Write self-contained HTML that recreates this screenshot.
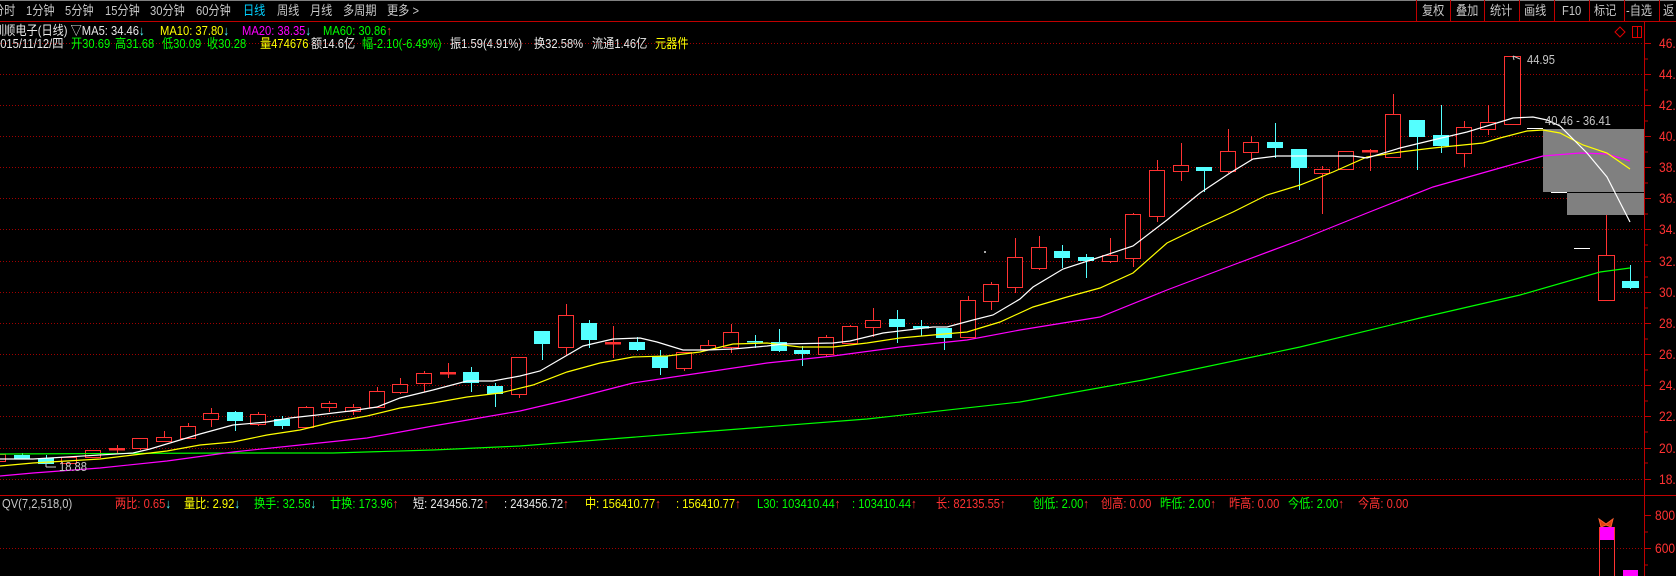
<!DOCTYPE html>
<html><head><meta charset="utf-8">
<style>
body{margin:0;background:#000;width:1676px;height:576px;overflow:hidden;position:relative;font-family:"Liberation Sans","Noto Sans CJK SC",sans-serif;font-size:13px;}
.t{position:absolute;white-space:nowrap;line-height:14px;transform:scaleX(0.86);transform-origin:0 0;}
.w{color:#e8e8e8}.y{color:#ffff00}.m{color:#ff00ff}.g{color:#00ff00}.c{color:#54ffff}.r{color:#ff3232}.gr{color:#c8c8c8}
svg{position:absolute;left:0;top:0}
</style></head><body>
<svg width="1676" height="576" viewBox="0 0 1676 576">
<line x1="0" y1="0.5" x2="1676" y2="0.5" stroke="#808080"/>
<line x1="0" y1="21.5" x2="1676" y2="21.5" stroke="#c00000"/>
<line x1="0" y1="495.5" x2="1676" y2="495.5" stroke="#c00000"/>
<line x1="1644.5" y1="21" x2="1644.5" y2="576" stroke="#c00000"/>
<g stroke="#c00000">
<line x1="1416.5" y1="0" x2="1416.5" y2="21"/><line x1="1450.5" y1="0" x2="1450.5" y2="21"/><line x1="1484.5" y1="0" x2="1484.5" y2="21"/><line x1="1519.5" y1="0" x2="1519.5" y2="21"/><line x1="1554.5" y1="0" x2="1554.5" y2="21"/><line x1="1589.5" y1="0" x2="1589.5" y2="21"/><line x1="1624.5" y1="0" x2="1624.5" y2="21"/><line x1="1659.5" y1="0" x2="1659.5" y2="21"/>
</g>
<g stroke="#a00000" stroke-dasharray="1 2">
<line x1="0" y1="43.5" x2="1644" y2="43.5"/><line x1="0" y1="74.5" x2="1644" y2="74.5"/><line x1="0" y1="105.5" x2="1644" y2="105.5"/><line x1="0" y1="136.5" x2="1644" y2="136.5"/><line x1="0" y1="167.5" x2="1644" y2="167.5"/><line x1="0" y1="198.5" x2="1644" y2="198.5"/><line x1="0" y1="229.5" x2="1644" y2="229.5"/><line x1="0" y1="261.5" x2="1644" y2="261.5"/><line x1="0" y1="292.5" x2="1644" y2="292.5"/><line x1="0" y1="323.5" x2="1644" y2="323.5"/><line x1="0" y1="354.5" x2="1644" y2="354.5"/><line x1="0" y1="385.5" x2="1644" y2="385.5"/><line x1="0" y1="416.5" x2="1644" y2="416.5"/><line x1="0" y1="448.5" x2="1644" y2="448.5"/><line x1="0" y1="479.5" x2="1644" y2="479.5"/><line x1="0" y1="548.5" x2="1644" y2="548.5"/>
</g>
<g stroke="#c00000">
<line x1="1644" y1="43.5" x2="1651" y2="43.5"/><line x1="1644" y1="74.5" x2="1651" y2="74.5"/><line x1="1644" y1="105.5" x2="1651" y2="105.5"/><line x1="1644" y1="136.5" x2="1651" y2="136.5"/><line x1="1644" y1="167.5" x2="1651" y2="167.5"/><line x1="1644" y1="198.5" x2="1651" y2="198.5"/><line x1="1644" y1="229.5" x2="1651" y2="229.5"/><line x1="1644" y1="261.5" x2="1651" y2="261.5"/><line x1="1644" y1="292.5" x2="1651" y2="292.5"/><line x1="1644" y1="323.5" x2="1651" y2="323.5"/><line x1="1644" y1="354.5" x2="1651" y2="354.5"/><line x1="1644" y1="385.5" x2="1651" y2="385.5"/><line x1="1644" y1="416.5" x2="1651" y2="416.5"/><line x1="1644" y1="448.5" x2="1651" y2="448.5"/><line x1="1644" y1="479.5" x2="1651" y2="479.5"/>
<line x1="1644" y1="59" x2="1648" y2="59"/><line x1="1644" y1="90" x2="1648" y2="90"/><line x1="1644" y1="121" x2="1648" y2="121"/><line x1="1644" y1="152" x2="1648" y2="152"/><line x1="1644" y1="183" x2="1648" y2="183"/><line x1="1644" y1="214" x2="1648" y2="214"/><line x1="1644" y1="245" x2="1648" y2="245"/><line x1="1644" y1="277" x2="1648" y2="277"/><line x1="1644" y1="308" x2="1648" y2="308"/><line x1="1644" y1="339" x2="1648" y2="339"/><line x1="1644" y1="370" x2="1648" y2="370"/><line x1="1644" y1="401" x2="1648" y2="401"/><line x1="1644" y1="432" x2="1648" y2="432"/><line x1="1644" y1="463" x2="1648" y2="463"/>
<line x1="1644" y1="515.5" x2="1651" y2="515.5"/><line x1="1644" y1="548.5" x2="1651" y2="548.5"/><line x1="1644" y1="532" x2="1648" y2="532"/><line x1="1644" y1="565" x2="1648" y2="565"/>
</g>
<path d="M1620 27 L1625 32 L1620 37 L1615 32 Z" fill="none" stroke="#e00000"/>
<rect x="1632.5" y="26.5" width="9" height="11" fill="none" stroke="#e00000"/><line x1="1637.5" y1="26" x2="1637.5" y2="38" stroke="#e00000"/>
<rect x="1543" y="129" width="101" height="63" fill="#808080"/>
<rect x="1567" y="193" width="77" height="22" fill="#808080"/>
<g stroke="#fff"><line x1="1527" y1="128.5" x2="1543" y2="128.5"/><line x1="1551" y1="192.5" x2="1567" y2="192.5"/><line x1="1574" y1="248.5" x2="1590" y2="248.5"/></g>
<rect x="984" y="251" width="2" height="2" fill="#aaa"/>
<g stroke-width="1">
<g stroke="#ff3232" fill="#000">
<rect x="-9.5" y="454.5" width="15" height="7"/>
<rect x="61.5" y="457.5" width="15" height="6"/>
<rect x="85.5" y="450.5" width="15" height="7"/>
<line x1="140.5" y1="448" x2="140.5" y2="450"/><rect x="132.5" y="438.5" width="15" height="10"/>
<line x1="164.5" y1="431" x2="164.5" y2="437"/><rect x="156.5" y="437.5" width="15" height="4"/>
<line x1="188.5" y1="423" x2="188.5" y2="426"/><rect x="180.5" y="426.5" width="15" height="12"/>
<line x1="211.5" y1="408" x2="211.5" y2="427"/><rect x="203.5" y="413.5" width="15" height="6"/>
<line x1="258.5" y1="412" x2="258.5" y2="426"/><rect x="250.5" y="414.5" width="15" height="10"/>
<line x1="306.5" y1="406" x2="306.5" y2="407"/><rect x="298.5" y="407.5" width="15" height="20"/>
<line x1="329.5" y1="401" x2="329.5" y2="412"/><rect x="321.5" y="403.5" width="15" height="4"/>
<line x1="353.5" y1="404" x2="353.5" y2="415"/><rect x="345.5" y="407.5" width="15" height="4"/>
<line x1="377.5" y1="387" x2="377.5" y2="391"/><rect x="369.5" y="391.5" width="15" height="16"/>
<line x1="400.5" y1="378" x2="400.5" y2="394"/><rect x="392.5" y="384.5" width="15" height="8"/>
<line x1="424.5" y1="371" x2="424.5" y2="392"/><rect x="416.5" y="373.5" width="15" height="10"/>
<line x1="519.5" y1="394" x2="519.5" y2="398"/><rect x="511.5" y="357.5" width="15" height="37"/>
<line x1="566.5" y1="304" x2="566.5" y2="355"/><rect x="558.5" y="315.5" width="15" height="32"/>
<line x1="684.5" y1="352" x2="684.5" y2="371"/><rect x="676.5" y="352.5" width="15" height="16"/>
<line x1="708.5" y1="340" x2="708.5" y2="345"/><rect x="700.5" y="345.5" width="15" height="4"/>
<line x1="731.5" y1="324" x2="731.5" y2="353"/><rect x="723.5" y="332.5" width="15" height="15"/>
<line x1="826.5" y1="335" x2="826.5" y2="356"/><rect x="818.5" y="337.5" width="15" height="17"/>
<line x1="850.5" y1="325" x2="850.5" y2="326"/><rect x="842.5" y="326.5" width="15" height="17"/>
<line x1="873.5" y1="308" x2="873.5" y2="337"/><rect x="865.5" y="320.5" width="15" height="7"/>
<line x1="968.5" y1="296" x2="968.5" y2="300"/><rect x="960.5" y="300.5" width="15" height="37"/>
<line x1="991.5" y1="282" x2="991.5" y2="310"/><rect x="983.5" y="284.5" width="15" height="17"/>
<line x1="1015.5" y1="238" x2="1015.5" y2="293"/><rect x="1007.5" y="257.5" width="15" height="30"/>
<line x1="1039.5" y1="236" x2="1039.5" y2="270"/><rect x="1031.5" y="247.5" width="15" height="21"/>
<line x1="1110.5" y1="238" x2="1110.5" y2="263"/><rect x="1102.5" y="255.5" width="15" height="6"/>
<line x1="1133.5" y1="213" x2="1133.5" y2="267"/><rect x="1125.5" y="214.5" width="15" height="44"/>
<line x1="1157.5" y1="160" x2="1157.5" y2="222"/><rect x="1149.5" y="170.5" width="15" height="46"/>
<line x1="1181.5" y1="143" x2="1181.5" y2="181"/><rect x="1173.5" y="165.5" width="15" height="6"/>
<line x1="1228.5" y1="129" x2="1228.5" y2="173"/><rect x="1220.5" y="151.5" width="15" height="20"/>
<line x1="1251.5" y1="136" x2="1251.5" y2="160"/><rect x="1243.5" y="142.5" width="15" height="10"/>
<line x1="1322.5" y1="166" x2="1322.5" y2="214"/><rect x="1314.5" y="169.5" width="15" height="4"/>
<rect x="1338.5" y="151.5" width="15" height="18"/>
<line x1="1393.5" y1="94" x2="1393.5" y2="114"/><rect x="1385.5" y="114.5" width="15" height="43"/>
<line x1="1464.5" y1="121" x2="1464.5" y2="167"/><rect x="1456.5" y="127.5" width="15" height="26"/>
<line x1="1488.5" y1="105" x2="1488.5" y2="135"/><rect x="1480.5" y="122.5" width="15" height="7"/>
<rect x="1504.5" y="56.5" width="16" height="68"/>
<line x1="1606.5" y1="215" x2="1606.5" y2="255"/><rect x="1598.5" y="255.5" width="16" height="45"/>
</g>
<g fill="#ff3232" stroke="#ff3232">
<line x1="117.5" y1="445" x2="117.5" y2="453"/><rect x="109.5" y="448.5" width="15" height="1.5"/>
<line x1="448.5" y1="363" x2="448.5" y2="378"/><rect x="440.5" y="372.5" width="15" height="1.5"/>
<line x1="613.5" y1="326" x2="613.5" y2="358"/><rect x="605.5" y="342.5" width="15" height="1.5"/>
<line x1="1370.5" y1="149" x2="1370.5" y2="171"/><rect x="1362.5" y="150.5" width="15" height="1.5"/>
</g>
<g fill="#54ffff" stroke="#54ffff">
<line x1="22.5" y1="453" x2="22.5" y2="458"/><rect x="14.5" y="455.5" width="15" height="3"/>
<rect x="38.5" y="458.5" width="15" height="5"/><line x1="46.5" y1="455" x2="46.5" y2="463"/>
<line x1="235.5" y1="411" x2="235.5" y2="431"/><rect x="227.5" y="412.5" width="15" height="8"/>
<line x1="282.5" y1="416" x2="282.5" y2="429"/><rect x="274.5" y="419.5" width="15" height="6"/>
<line x1="471.5" y1="367" x2="471.5" y2="392"/><rect x="463.5" y="372.5" width="15" height="10"/>
<line x1="495.5" y1="383" x2="495.5" y2="407"/><rect x="487.5" y="386.5" width="15" height="7"/>
<line x1="542.5" y1="331" x2="542.5" y2="360"/><rect x="534.5" y="331.5" width="15" height="12"/>
<line x1="589.5" y1="320" x2="589.5" y2="348"/><rect x="581.5" y="323.5" width="15" height="16"/>
<line x1="637.5" y1="337" x2="637.5" y2="351"/><rect x="629.5" y="342.5" width="15" height="7"/>
<line x1="660.5" y1="350" x2="660.5" y2="375"/><rect x="652.5" y="356.5" width="15" height="11"/>
<line x1="755.5" y1="335" x2="755.5" y2="348"/><rect x="747.5" y="341.5" width="15" height="0.5"/>
<line x1="779.5" y1="329" x2="779.5" y2="352"/><rect x="771.5" y="342.5" width="15" height="8"/>
<line x1="802.5" y1="346" x2="802.5" y2="366"/><rect x="794.5" y="350.5" width="15" height="3"/>
<line x1="897.5" y1="310" x2="897.5" y2="343"/><rect x="889.5" y="319.5" width="15" height="7"/>
<line x1="921.5" y1="320" x2="921.5" y2="336"/><rect x="913.5" y="326.5" width="15" height="1.5"/>
<line x1="944.5" y1="328" x2="944.5" y2="350"/><rect x="936.5" y="328.5" width="15" height="9"/>
<line x1="1062.5" y1="245" x2="1062.5" y2="268"/><rect x="1054.5" y="251.5" width="15" height="6"/>
<line x1="1086.5" y1="254" x2="1086.5" y2="278"/><rect x="1078.5" y="257.5" width="15" height="3"/>
<line x1="1204.5" y1="167" x2="1204.5" y2="192"/><rect x="1196.5" y="167.5" width="15" height="3"/>
<line x1="1275.5" y1="123" x2="1275.5" y2="158"/><rect x="1267.5" y="142.5" width="15" height="5"/>
<line x1="1299.5" y1="149" x2="1299.5" y2="190"/><rect x="1291.5" y="149.5" width="15" height="18"/>
<line x1="1417.5" y1="120" x2="1417.5" y2="170"/><rect x="1409.5" y="120.5" width="15" height="16"/>
<line x1="1441.5" y1="105" x2="1441.5" y2="153"/><rect x="1433.5" y="135.5" width="15" height="10"/>
<line x1="1630.5" y1="265" x2="1630.5" y2="289"/><rect x="1622.5" y="281.5" width="16" height="6"/>
</g>
</g>
<g fill="none" stroke-width="1.2">
<polyline stroke="#00ff00" points="0,454 233,453 333,453 433,450 520,446 700,432 867,419 1020,402 1143,380 1300,347 1420,318 1520,295 1600,272 1630,268"/>
<polyline stroke="#ff00ff" points="0,476 33,473 100,468 167,461 233,452 300,445 367,438 433,426 520,411 567,400 633,383 700,373 767,363 833,356 900,347 967,340 1020,330 1100,317 1167,290 1233,265 1300,240 1367,213 1433,187 1500,168 1543,156 1580,153 1607,154 1630,161"/>
<polyline stroke="#ffff00" points="0,466 33,463 100,459 133,455 167,451 200,445 233,442 267,435 300,430 333,422 367,416 400,408 433,403 467,397 500,393 533,385 567,372 600,363 633,357 667,356 700,352 733,344 767,343 800,347 833,347 867,343 900,338 933,335 967,332 1000,322 1033,307 1067,297 1100,288 1133,273 1167,243 1200,227 1233,212 1267,195 1300,185 1333,172 1367,157 1400,152 1433,148 1483,143 1500,138 1527,131 1543,130 1560,133 1583,145 1607,153 1630,169"/>
<polyline stroke="#ffffff" points="0,459 33,459 133,453 150,449 200,434 233,425 267,422 290,418 317,415 350,411 377,407 400,398 433,390 467,381 493,381 520,376 540,371 583,346 613,339 640,338 657,342 683,350 707,350 733,349 767,346 783,344 833,343 850,341 883,333 933,327 947,327 973,320 993,315 1020,299 1033,287 1063,269 1100,257 1133,246 1167,220 1200,193 1230,173 1253,159 1277,156 1353,156 1367,158 1400,148 1433,140 1467,132 1500,122 1513,118 1533,117 1547,120 1560,126 1587,153 1607,177 1630,222"/>
</g>
<path d="M1513 56 L1520 59 M1513 56 L1514 60" stroke="#c8c8c8" fill="none"/>
<path d="M46 467 L56 467 M46 467 L46 462" stroke="#c8c8c8" fill="none"/>
<rect x="1599.5" y="527.5" width="15" height="60" fill="none" stroke="#ff3232"/>
<rect x="1600" y="527" width="14" height="13" fill="#ff00ff"/>
<rect x="1623" y="570" width="15" height="6" fill="#ff00ff"/>
<path d="M1599 519 L1606 524 L1613 519 L1611 527 L1606 525 L1601 527 Z" fill="#e04010" stroke="#ff6030"/>
</svg>

<div class="t gr" style="left:-7px;top:4px">分时</div>
<div class="t gr" style="left:26px;top:4px">1分钟</div>
<div class="t gr" style="left:65px;top:4px">5分钟</div>
<div class="t gr" style="left:105px;top:4px">15分钟</div>
<div class="t gr" style="left:150px;top:4px">30分钟</div>
<div class="t gr" style="left:196px;top:4px">60分钟</div>
<div class="t" style="left:243px;top:4px;color:#00d0ff">日线</div>
<div class="t gr" style="left:277px;top:4px">周线</div>
<div class="t gr" style="left:310px;top:4px">月线</div>
<div class="t gr" style="left:343px;top:4px">多周期</div>
<div class="t gr" style="left:387px;top:4px">更多 &gt;</div>
<div class="t gr" style="left:1422px;top:4px">复权</div>
<div class="t gr" style="left:1456px;top:4px">叠加</div>
<div class="t gr" style="left:1490px;top:4px">统计</div>
<div class="t gr" style="left:1524px;top:4px">画线</div>
<div class="t gr" style="left:1562px;top:4px">F10</div>
<div class="t gr" style="left:1594px;top:4px">标记</div>
<div class="t gr" style="left:1626px;top:4px">-自选</div>
<div class="t gr" style="left:1663px;top:4px">返</div>

<div class="t w" style="left:-7px;top:24px">圳顺电子(日线) ▽MA5: 34.46<span class="c">↓</span></div>
<div class="t y" style="left:160px;top:24px">MA10: 37.80<span class="c">↓</span></div>
<div class="t m" style="left:242px;top:24px">MA20: 38.35<span class="c">↓</span></div>
<div class="t g" style="left:323px;top:24px">MA60: 30.86<span class="r">↑</span></div>

<div class="t w" style="left:-6px;top:37px">2015/11/12/四</div>
<div class="t g" style="left:71px;top:37px">开30.69</div>
<div class="t g" style="left:115px;top:37px">高31.68</div>
<div class="t g" style="left:162px;top:37px">低30.09</div>
<div class="t g" style="left:207px;top:37px">收30.28</div>
<div class="t y" style="left:260px;top:37px">量474676</div>
<div class="t w" style="left:311px;top:37px">额14.6亿</div>
<div class="t g" style="left:362px;top:37px">幅-2.10(-6.49%)</div>
<div class="t w" style="left:450px;top:37px">振1.59(4.91%)</div>
<div class="t w" style="left:534px;top:37px">换32.58%</div>
<div class="t w" style="left:592px;top:37px">流通1.46亿</div>
<div class="t y" style="left:655px;top:37px">元器件</div>

<div class="t gr" style="left:1527px;top:53px">44.95</div>
<div class="t gr" style="left:1545px;top:114px">40.46 - 36.41</div>
<div class="t gr" style="left:59px;top:460px">18.88</div>

<div class="t r" style="left:1659px;top:36px;font-size:14px">46.00</div>
<div class="t r" style="left:1659px;top:67px;font-size:14px">44.00</div>
<div class="t r" style="left:1659px;top:98px;font-size:14px">42.00</div>
<div class="t r" style="left:1659px;top:129px;font-size:14px">40.00</div>
<div class="t r" style="left:1659px;top:160px;font-size:14px">38.00</div>
<div class="t r" style="left:1659px;top:191px;font-size:14px">36.00</div>
<div class="t r" style="left:1659px;top:222px;font-size:14px">34.00</div>
<div class="t r" style="left:1659px;top:254px;font-size:14px">32.00</div>
<div class="t r" style="left:1659px;top:285px;font-size:14px">30.00</div>
<div class="t r" style="left:1659px;top:316px;font-size:14px">28.00</div>
<div class="t r" style="left:1659px;top:347px;font-size:14px">26.00</div>
<div class="t r" style="left:1659px;top:378px;font-size:14px">24.00</div>
<div class="t r" style="left:1659px;top:409px;font-size:14px">22.00</div>
<div class="t r" style="left:1659px;top:441px;font-size:14px">20.00</div>
<div class="t r" style="left:1659px;top:472px;font-size:14px">18.00</div>
<div class="t r" style="left:1655px;top:508px;font-size:14px">800</div>
<div class="t r" style="left:1655px;top:541px;font-size:14px">600</div>

<div class="t gr" style="left:2px;top:497px">QV(7,2,518,0)</div>
<div class="t r" style="left:115px;top:497px">两比: 0.65<span class="c">↓</span></div>
<div class="t y" style="left:184px;top:497px">量比: 2.92<span class="c">↓</span></div>
<div class="t g" style="left:254px;top:497px">换手: 32.58<span class="c">↓</span></div>
<div class="t g" style="left:330px;top:497px">廿换: 173.96<span class="r">↑</span></div>
<div class="t w" style="left:413px;top:497px">短: 243456.72<span class="r">↑</span></div>
<div class="t w" style="left:504px;top:497px">: 243456.72<span class="r">↑</span></div>
<div class="t y" style="left:585px;top:497px">中: 156410.77<span class="r">↑</span></div>
<div class="t y" style="left:676px;top:497px">: 156410.77<span class="r">↑</span></div>
<div class="t g" style="left:757px;top:497px">L30: 103410.44<span class="r">↑</span></div>
<div class="t g" style="left:852px;top:497px">: 103410.44<span class="r">↑</span></div>
<div class="t r" style="left:936px;top:497px">长: 82135.55<span class="r">↑</span></div>
<div class="t g" style="left:1033px;top:497px">创低: 2.00<span class="r">↑</span></div>
<div class="t r" style="left:1101px;top:497px">创高: 0.00</div>
<div class="t g" style="left:1160px;top:497px">昨低: 2.00<span class="r">↑</span></div>
<div class="t r" style="left:1229px;top:497px">昨高: 0.00</div>
<div class="t g" style="left:1288px;top:497px">今低: 2.00<span class="r">↑</span></div>
<div class="t r" style="left:1358px;top:497px">今高: 0.00</div>
</body></html>
